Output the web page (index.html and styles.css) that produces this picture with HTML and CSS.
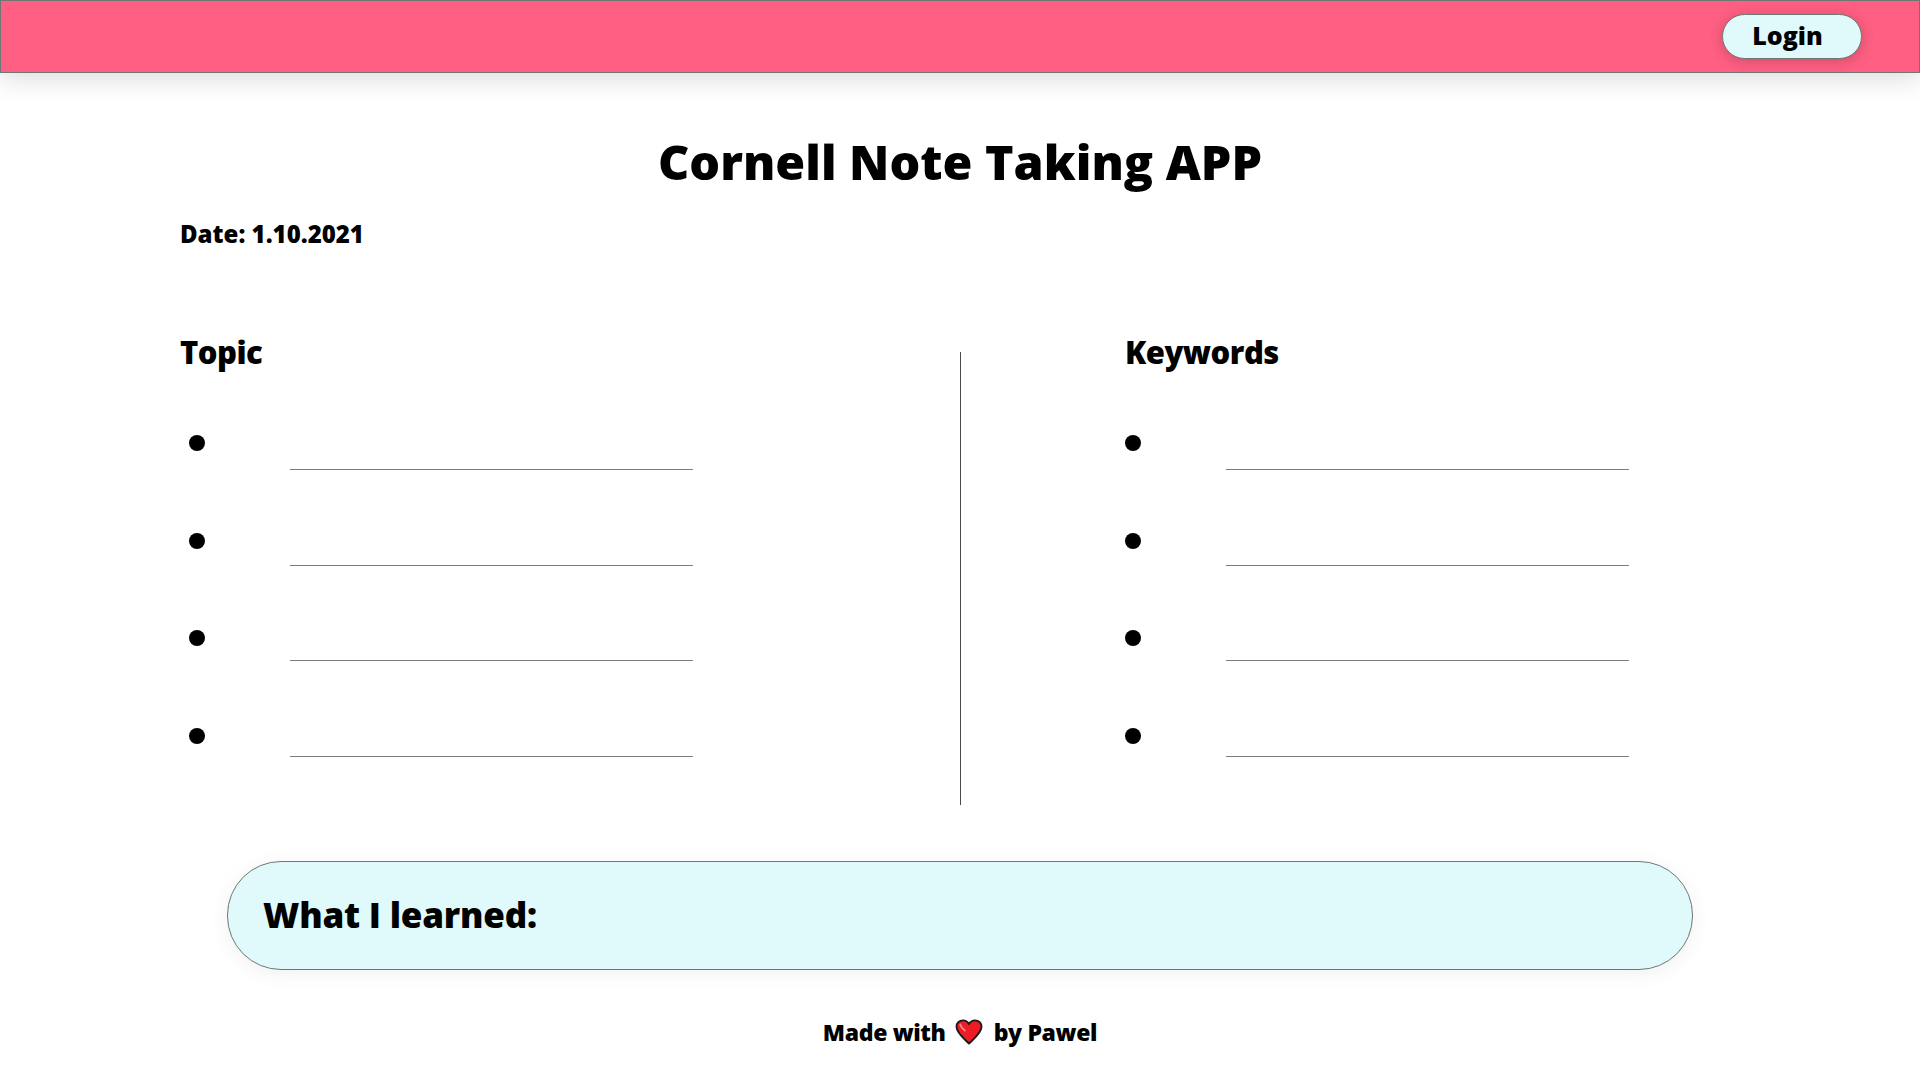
FILE: index.html
```html
<!DOCTYPE html>
<html lang="en">
<head>
<meta charset="utf-8">
<title>Cornell Note Taking APP</title>
<link rel="stylesheet" href="styles.css">
</head>
<body>
<header class="topbar">
  <button class="login">Login</button>
</header>
<main class="page">
  <h1 class="title">Cornell Note Taking APP</h1>
  <p class="date">Date: 1.10.2021</p>
  <section class="columns">
    <div class="col col-left">
      <h2 class="col-title">Topic</h2>
      <div class="notes">
        <div class="dots"><span class="dot"></span><span class="dot"></span><span class="dot"></span><span class="dot"></span></div>
        <div class="lines"><span class="line"></span><span class="line"></span><span class="line"></span><span class="line"></span></div>
      </div>
    </div>
    <div class="divider"></div>
    <div class="col col-right">
      <h2 class="col-title">Keywords</h2>
      <div class="notes">
        <div class="dots"><span class="dot"></span><span class="dot"></span><span class="dot"></span><span class="dot"></span></div>
        <div class="lines"><span class="line"></span><span class="line"></span><span class="line"></span><span class="line"></span></div>
      </div>
    </div>
  </section>
  <section class="learned"><h2 class="learned-text">What I learned:</h2></section>
  <footer class="footer">
    <span>Made with</span>
    <svg class="heart" viewBox="0 0 30 28" width="28" height="26" aria-hidden="true">
      <path d="M15 26.500 C12 23 2 16 1.500 8.500 C1.300 4.500 4.500 1.500 8.500 1.500 C11 1.500 13.500 3 15 5.500 C16.500 3 19 1.500 21.500 1.500 C25.500 1.500 28.700 4.500 28.500 8.500 C28 16 18 23 15 26.500 Z" fill="#ee1c25" stroke="#1a1a1a" stroke-width="2" stroke-linejoin="round"/>
      <path d="M5.500 6 C6.500 9 8.500 11 10.500 12.500" fill="none" stroke="#f58a8a" stroke-width="2" stroke-linecap="round"/>
    </svg>
    <span class="footer-by">by Pawel</span>
  </footer>
</main>
</body>
</html>
```

FILE: styles.css
```css
* { box-sizing: border-box; }
html, body { margin: 0; padding: 0; }
body {
  background: #fff;
  color: #000;
  font-family: "Open Sans", "Lato", sans-serif;
  font-weight: 800;
  height: 1080px;
  overflow: hidden;
}
.topbar {
  height: 73px;
  background: #ff5f82;
  border: 1px solid #6f7776;
  box-shadow: 0 8px 24px rgba(0, 0, 0, 0.12);
  display: flex;
  justify-content: flex-end;
  align-items: center;
  padding: 0 57px 0 0;
}
.login {
  width: 140px;
  height: 45px;
  border: 1px solid #6f7776;
  border-radius: 23px;
  background: #e0f9fa;
  box-shadow: 0 2px 14px rgba(0, 0, 0, 0.2);
  font: inherit;
  font-size: 25px;
  color: #000;
  padding: 0 9px 3px 0;
}
.page { padding: 0 180px; }
.title {
  margin: 59px 0 0;
  height: 58px;
  line-height: 58px;
  font-size: 48.400px;
  font-weight: 800;
  text-align: center;
}
.date {
  margin: 28px 0 0;
  height: 32px;
  line-height: 32px;
  font-size: 24px;
}
.columns {
  display: grid;
  grid-template-columns: 780px 1px 1fr;
  margin-top: 102px;
  height: 453px;
}
.divider { background: #4a4a4a; }
.col-right { padding-left: 164px; }
.col-title {
  margin: 0;
  height: 0;
  line-height: 0;
  font-size: 31px;
  letter-spacing: -0.500px;
  font-weight: 800;
}
.notes {
  display: flex;
}
.dots {
  display: flex;
  flex-direction: column;
  gap: 81.600px;
  padding: 83px 0 0 9px;
}
.col-right .dots { padding-left: 0; }
.dot {
  display: block;
  width: 16px;
  height: 16px;
  border-radius: 50%;
  background: #000;
}
.lines {
  display: flex;
  flex-direction: column;
  gap: 94.600px;
  padding: 117px 0 0 85px;
}
.col-right .lines { padding-left: 85px; }
.line {
  display: block;
  width: 403px;
  height: 1px;
  background: #7d7d7d;
}
.learned {
  margin: 56px 47px 0;
  height: 109px;
  background: #e0f9fa;
  border: 1px solid #6f7776;
  border-radius: 54px;
  box-shadow: 0 4px 20px rgba(0, 0, 0, 0.06);
  display: flex;
  align-items: center;
  padding: 0 0 2px 35px;
}
.learned-text {
  margin: 0;
  font-size: 35px;
  letter-spacing: -0.200px;
  font-weight: 800;
}
.footer {
  margin-top: 47px;
  display: flex;
  justify-content: center;
  align-items: center;
  gap: 9px;
  font-size: 23px;
  letter-spacing: -0.350px;
  height: 30px;
}
.footer-by { margin-left: 2px; }
.heart { flex: none; }
```
